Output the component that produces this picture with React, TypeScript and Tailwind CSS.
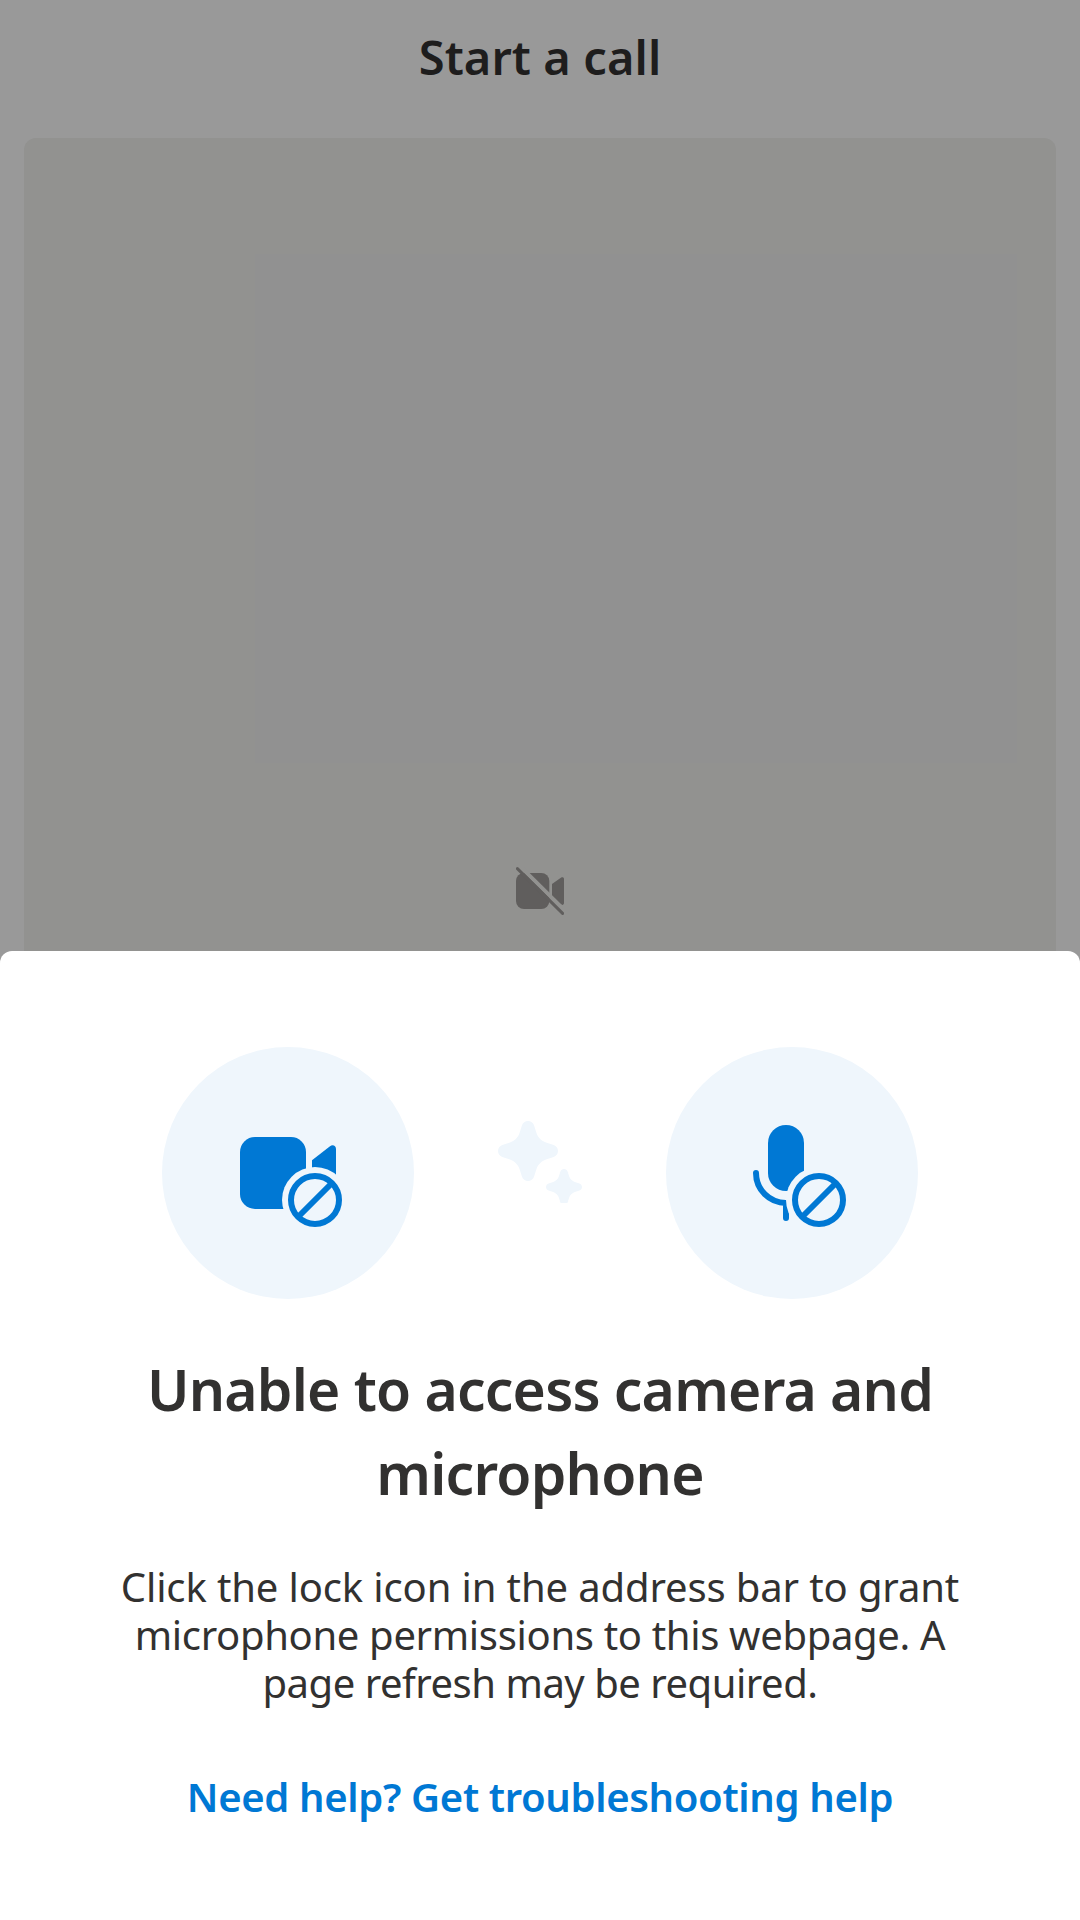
import type { ReactNode } from "react";

function VideoOffIcon() {
  return (
    <svg className="h-12 w-12" viewBox="0 0 48 48" fill="none">
      <rect x="0" y="6" width="33.3" height="36" rx="8" fill="#605e5d" />
      <path d="M36 17L45.2 10.6C46.5 9.7 48 10.4 48 12V36C48 37.6 46.5 38.4 45.2 37.5L36 31Z" fill="#605e5d" />
      <path d="M0 -4.7L50.5 45.2" stroke="#929290" strokeWidth="4" />
      <path d="M1.4 1.6L46.6 46.4" stroke="#605e5d" strokeWidth="3" strokeLinecap="round" />
    </svg>
  );
}

function ProhibitedBadge() {
  return (
    <g>
      <circle cx="153" cy="153" r="33" fill="#eff6fc" />
      <circle cx="153" cy="153" r="24" stroke="#0078d4" strokeWidth="6" />
      <path d="M136.5 169.5L169.5 136.5" stroke="#0078d4" strokeWidth="6" />
    </g>
  );
}

function DeviceCircle({ children }: { children: ReactNode }) {
  return (
    <div className="h-[252px] w-[252px] rounded-full bg-[#eff6fc]">
      <svg className="h-full w-full" viewBox="0 0 252 252" fill="none">
        {children}
        <ProhibitedBadge />
      </svg>
    </div>
  );
}

const STAR =
  "M0-30C-2.8-30-5.2-28.2-6-25.7L-8.5-18C-10-13.5-13.5-10-18-8.5L-25.7-6C-28.2-5.2-30-2.8-30 0C-30 2.8-28.2 5.2-25.7 6L-18 8.5C-13.5 10-10 13.5-8.5 18L-6 25.7C-5.2 28.2-2.8 30 0 30C2.8 30 5.2 28.2 6 25.7L8.5 18C10 13.5 13.5 10 18 8.5L25.7 6C28.2 5.2 30 2.8 30 0C30-2.8 28.2-5.2 25.7-6L18-8.5C13.5-10 10-13.5 8.5-18L6-25.7C5.2-28.2 2.8-30 0-30Z";

function Sparkle() {
  return (
    <svg className="mb-6 h-[84px] w-[84px]" viewBox="0 0 84 84" fill="#eff6fc">
      <path d={STAR} transform="translate(30 32)" />
      <path d={STAR} transform="translate(66 68) scale(0.6)" />
    </svg>
  );
}

export default function App() {
  return (
    <div className="flex h-[1920px] w-[1080px] flex-col overflow-hidden bg-[#999999] font-['Noto_Sans','Open_Sans',sans-serif]">
      <header className="flex h-[138px] shrink-0 justify-center pt-[27px]">
        <h1 className="text-[47px] leading-[60px] font-semibold tracking-[0.09px] text-[#1e1d1d]">Start a call</h1>
      </header>

      <main className="mx-6 flex h-[813px] shrink-0 flex-col rounded-t-xl bg-[#929290] pt-[116px]">
        <div className="mr-[39px] ml-[231px] h-[509px] bg-[#919191]" />
        <div className="mt-[104px] flex justify-center">
          <VideoOffIcon />
        </div>
      </main>

      <section className="flex grow flex-col items-center rounded-t-xl bg-white pt-24 text-center text-[#323130]">
        <div className="flex items-center">
          <DeviceCircle>
            <rect x="78" y="90" width="66" height="72" rx="15" fill="#0078d4" />
            <path d="M150 113.3L168 99.2C170.6 97.2 174 98.6 174 102V140H150Z" fill="#0078d4" />
          </DeviceCircle>
          <div className="flex w-[252px] justify-center">
            <Sparkle />
          </div>
          <DeviceCircle>
            <rect x="102" y="78" width="36" height="66" rx="18" fill="#0078d4" />
            <path
              d="M90 126C90 142.6 103.4 156 120 156V171"
              stroke="#0078d4"
              strokeWidth="6"
              strokeLinecap="round"
            />
          </DeviceCircle>
        </div>

        <h2 className="mt-12 text-[57px] leading-[84px] font-semibold whitespace-nowrap">
          <span className="block tracking-[-0.79px]">Unable to access camera and</span>
          <span className="block tracking-[-0.76px]">microphone</span>
        </h2>
        <p className="mt-12 text-[40px] leading-12 whitespace-nowrap">
          <span className="block tracking-[-0.13px]">Click the lock icon in the address bar to grant</span>
          <span className="block tracking-[-0.33px]">microphone permissions to this webpage. A</span>
          <span className="block tracking-[-0.48px]">page refresh may be required.</span>
        </p>
        <a className="mt-[66px] text-[40px] leading-12 font-semibold tracking-[-0.34px] whitespace-nowrap text-[#0078d4]">
          Need help? Get troubleshooting help
        </a>
      </section>
    </div>
  );
}
